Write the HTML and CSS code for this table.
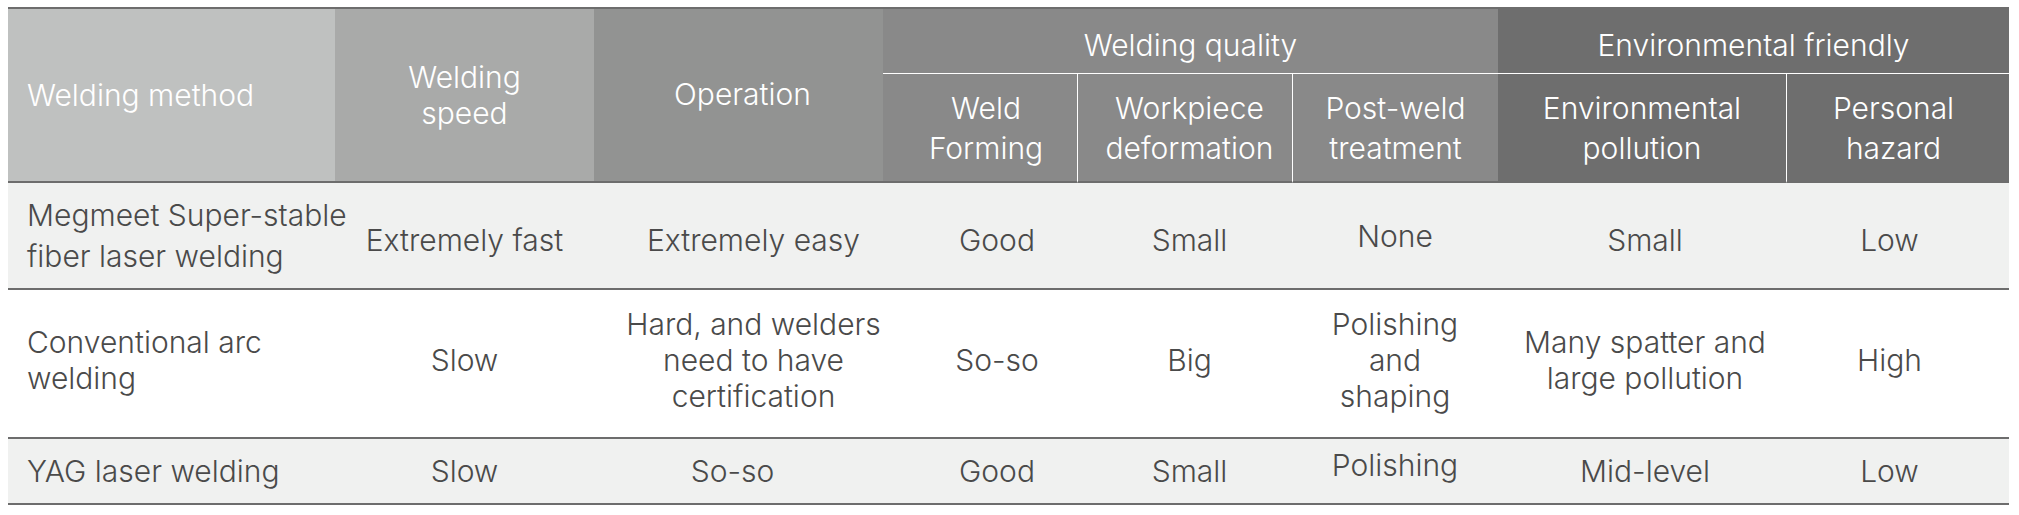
FILE: index.html
```html
<!DOCTYPE html>
<html lang="en">
<head>
<meta charset="utf-8">
<title>Welding comparison</title>
<link rel="stylesheet" href="styles.css">
</head>
<body>
<div class="wrap">
<table class="cmp">
  <colgroup>
    <col class="c1"><col class="c2"><col class="c3"><col class="c4"><col class="c5"><col class="c6"><col class="c7"><col class="c8">
  </colgroup>
  <thead>
    <tr class="h1">
      <th rowspan="2" class="method">Welding method</th>
      <th rowspan="2" class="speed">Welding<br>speed</th>
      <th rowspan="2" class="op">Operation</th>
      <th colspan="3" class="group quality">Welding quality</th>
      <th colspan="2" class="group env">Environmental friendly</th>
    </tr>
    <tr class="h2">
      <th class="sub quality forming">Weld<br>Forming</th>
      <th class="sub quality sep deform">Workpiece<br>deformation</th>
      <th class="sub quality sep">Post-weld<br>treatment</th>
      <th class="sub env">Environmental<br>pollution</th>
      <th class="sub env sep hazard">Personal<br>hazard</th>
    </tr>
  </thead>
  <tbody>
    <tr class="r1 alt">
      <td class="name">Megmeet Super-stable<br>fiber laser welding</td>
      <td>Extremely fast</td>
      <td>Extremely easy</td>
      <td>Good</td>
      <td>Small</td>
      <td class="raise">None</td>
      <td>Small</td>
      <td>Low</td>
    </tr>
    <tr class="r2">
      <td class="name">Conventional arc<br>welding</td>
      <td>Slow</td>
      <td class="hard">Hard, and welders<br>need to have<br>certification</td>
      <td>So-so</td>
      <td>Big</td>
      <td>Polishing<br>and<br>shaping</td>
      <td>Many spatter and<br>large pollution</td>
      <td>High</td>
    </tr>
    <tr class="r3 alt">
      <td class="name">YAG laser welding</td>
      <td>Slow</td>
      <td class="soso">So-so</td>
      <td>Good</td>
      <td>Small</td>
      <td class="raise">Polishing</td>
      <td>Mid-level</td>
      <td>Low</td>
    </tr>
  </tbody>
</table>
</div>
</body>
</html>
```

FILE: styles.css
```css
html, body {
  margin: 0;
  padding: 0;
  background: #ffffff;
}

.wrap {
  padding: 7px 0 0 8px;
}

.cmp {
  width: 2001px;
  table-layout: fixed;
  border-collapse: separate;
  border-spacing: 0;
  border-top: 2px solid #6d6d6d;
  font-family: "Inter", "Noto Sans", sans-serif;
  font-weight: 300;
  font-size: 30px;
}

.c1 { width: 327px; }
.c2 { width: 259px; }
.c3 { width: 289px; }
.c4 { width: 194px; }
.c5 { width: 215px; }
.c6 { width: 206px; }
.c7 { width: 288px; }
.c8 { width: 223px; }

.cmp th {
  color: #ffffff;
  font-weight: 300;
  text-align: center;
  vertical-align: middle;
  line-height: 40px;
  padding: 0 6px;
  border-bottom: 2px solid #6d6d6d;
  white-space: nowrap;
}

.cmp th.method {
  text-align: left;
  padding-left: 19px;
  background: #bfc1c0;
}
.cmp th.speed { background: #a9aaa9; line-height: 36px; }
.cmp th.op { background: #929392; padding-left: 14px; padding-bottom: 3px; }
.cmp th.quality { background: #898989; }
.cmp th.env { background: #6e6e6e; }

.cmp th.forming { padding-left: 18px; }
.cmp th.deform { padding-left: 15px; }
.cmp th.hazard { padding-left: 0; padding-right: 9px; }

.cmp th.group {
  border-bottom: 1px solid #ffffff;
  padding-top: 7px;
}

.cmp th.sep {
  border-left: 1px solid #ffffff;
}

.h1 { height: 65px; }
.h2 { height: 109px; }

.cmp td {
  color: #4a4a4a;
  text-align: center;
  vertical-align: middle;
  line-height: 36px;
  padding: 0 6px;
  border-bottom: 2px solid #6d6d6d;
  white-space: nowrap;
}

.cmp td.name {
  text-align: left;
  padding-left: 19px;
  padding-right: 0;
}

.cmp tbody td:nth-child(3) { padding-left: 36px; }
.cmp tbody td.hard { padding-left: 30px; padding-right: 0; }
.cmp tbody td.soso { padding-left: 0; padding-right: 12px; }
.cmp tbody td:nth-child(4) { padding-left: 40px; }
.cmp tbody td:nth-child(5) { padding-left: 16px; }
.cmp tbody td:nth-child(7) { padding-left: 12px; }
.cmp tbody td:nth-child(8) { padding-left: 0; padding-right: 16px; }

.r1 td { padding-top: 9px; }
.r1 td.name { padding-top: 0; line-height: 41px; }
.r1 td.raise { padding-top: 0; }
.r2 td { padding-bottom: 8px; }
.r3 td.raise { padding-bottom: 13px; }

.alt td { background: #f0f1f0; }

.r1 { height: 107px; }
.r2 { height: 149px; }
.r3 { height: 66px; }
```
